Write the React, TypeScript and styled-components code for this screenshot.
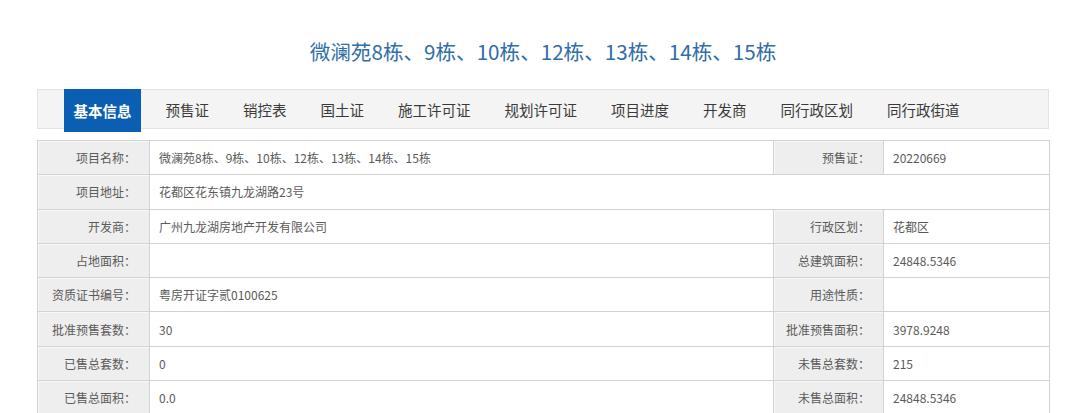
import React from "react";
import styled, { createGlobalStyle } from "styled-components";

const GlobalStyle = createGlobalStyle`
  html, body {
    margin: 0;
    padding: 0;
    background: #ffffff;
  }
  body {
    font-family: "Noto Sans CJK SC", "Noto Sans", sans-serif;
  }
`;

const Page = styled.div`
  width: 1012px;
  margin-left: 37px;
`;

const Title = styled.h1`
  margin: 0;
  padding-top: 36px;
  height: 53px;
  line-height: 30px;
  font-size: 20.6px;
  font-weight: 400;
  color: #2f6ea6;
  text-align: center;
`;

const TabBar = styled.ul`
  display: flex;
  align-items: flex-start;
  gap: 15px;
  box-sizing: border-box;
  height: 40px;
  margin: 0;
  padding: 0 0 0 26px;
  list-style: none;
  background: #f4f4f4;
  border: 1px solid #e3e3e3;
`;

const Tab = styled.li<{ $active?: boolean }>`
  box-sizing: border-box;
  height: ${(p) => (p.$active ? "43px" : "38px")};
  margin-top: ${(p) => (p.$active ? "-1px" : "0")};
  padding: 0 9.5px;
  display: flex;
  align-items: center;
  font-size: 14.5px;
  white-space: nowrap;
  color: ${(p) => (p.$active ? "#ffffff" : "#3a3a3a")};
  font-weight: ${(p) => (p.$active ? 700 : 400)};
  background: ${(p) => (p.$active ? "#0b5fb2" : "transparent")};
  cursor: pointer;
`;

const InfoTable = styled.table`
  margin-top: 11px;
  width: 1012px;
  table-layout: fixed;
  border-collapse: collapse;
  font-size: 12px;
  color: #5a5a5a;
`;

const Row = styled.tr`
  height: 34.3px;
`;

const Label = styled.td`
  border: 1px solid #d2d2d2;
  background: #eeeeee;
  box-shadow: inset 1px 1px 0 #f8f8f8;
  text-align: right;
  padding: 0 13px 0 0;
  white-space: nowrap;
  color: #5a5a5a;
`;

const Value = styled.td`
  border: 1px solid #d2d2d2;
  background: #ffffff;
  padding: 0 0 0 9px;
  white-space: nowrap;
  color: #5a5a5a;
`;

const tabs = [
  "基本信息",
  "预售证",
  "销控表",
  "国土证",
  "施工许可证",
  "规划许可证",
  "项目进度",
  "开发商",
  "同行政区划",
  "同行政街道",
];

type Cell = [string, string];
const rows: { left: Cell; right?: Cell }[] = [
  { left: ["项目名称", "微澜苑8栋、9栋、10栋、12栋、13栋、14栋、15栋"], right: ["预售证", "20220669"] },
  { left: ["项目地址", "花都区花东镇九龙湖路23号"] },
  { left: ["开发商", "广州九龙湖房地产开发有限公司"], right: ["行政区划", "花都区"] },
  { left: ["占地面积", ""], right: ["总建筑面积", "24848.5346"] },
  { left: ["资质证书编号", "粤房开证字贰0100625"], right: ["用途性质", ""] },
  { left: ["批准预售套数", "30"], right: ["批准预售面积", "3978.9248"] },
  { left: ["已售总套数", "0"], right: ["未售总套数", "215"] },
  { left: ["已售总面积", "0.0"], right: ["未售总面积", "24848.5346"] },
];

export default function App() {
  return (
    <>
      <GlobalStyle />
      <Page>
        <Title>微澜苑8栋、9栋、10栋、12栋、13栋、14栋、15栋</Title>
        <TabBar>
          {tabs.map((t, i) => (
            <Tab key={t} $active={i === 0}>
              {t}
            </Tab>
          ))}
        </TabBar>
        <InfoTable>
          <colgroup>
            <col style={{ width: 112 }} />
            <col style={{ width: 624 }} />
            <col style={{ width: 110 }} />
            <col style={{ width: 166 }} />
          </colgroup>
          <tbody>
            {rows.map((r) => (
              <Row key={r.left[0]}>
                <Label>{r.left[0]}：</Label>
                <Value colSpan={r.right ? 1 : 3}>{r.left[1]}</Value>
                {r.right && (
                  <>
                    <Label>{r.right[0]}：</Label>
                    <Value>{r.right[1]}</Value>
                  </>
                )}
              </Row>
            ))}
          </tbody>
        </InfoTable>
      </Page>
    </>
  );
}
